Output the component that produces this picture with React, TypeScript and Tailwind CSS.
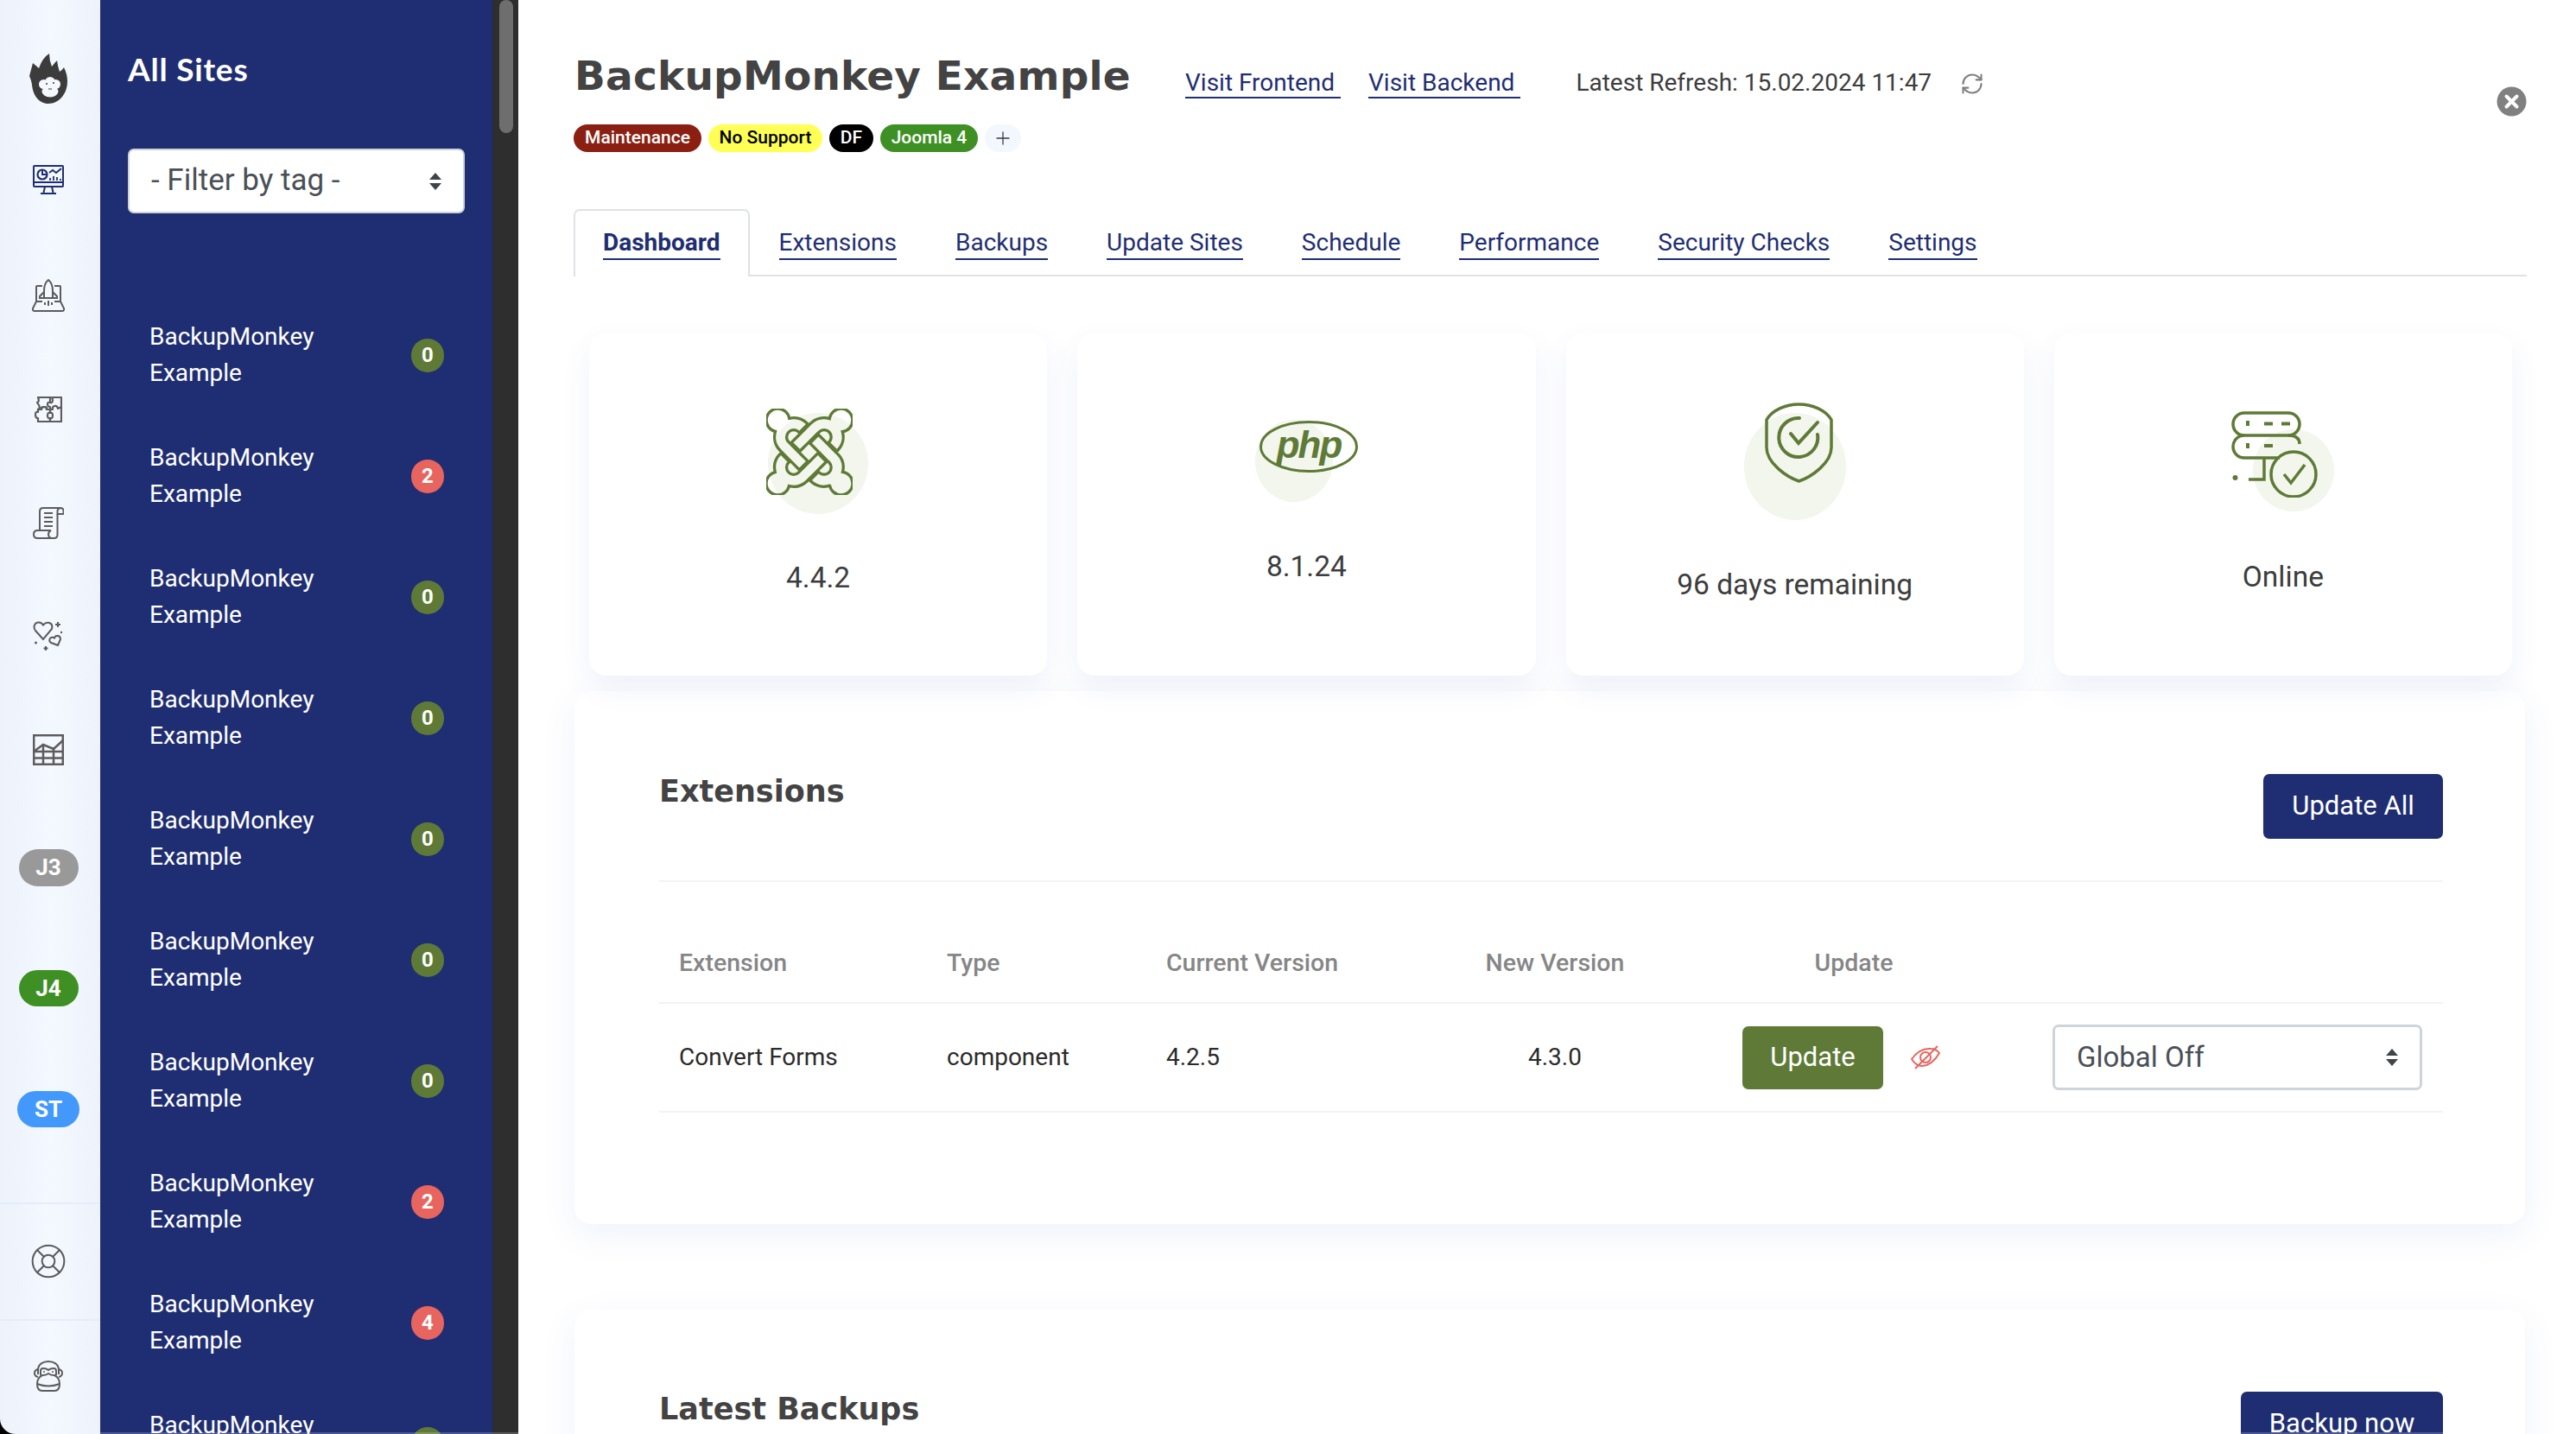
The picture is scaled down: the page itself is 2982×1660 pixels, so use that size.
import { LifeBuoy, Plus, RefreshCw } from 'lucide-react'
import { SiJoomla } from 'react-icons/si'

const NAVY = '#1f2e73'

const sites = [0, 2, 0, 0, 0, 0, 0, 2, 4, 0]
const tags = [
  { label: 'Maintenance', cls: 'w-[148px] bg-[#8b2012] text-white' },
  { label: 'No Support', cls: 'w-[132px] bg-[#ffff55] text-black' },
  { label: 'DF', cls: 'w-[51px] bg-black text-white' },
  { label: 'Joomla 4', cls: 'w-[113px] bg-[#3f9024] text-white' },
]
const tabs = ['Extensions', 'Backups', 'Update Sites', 'Schedule', 'Performance', 'Security Checks', 'Settings']

function Logo() {
  return (
    <svg width="44" height="58" viewBox="0 0 44 58" className="mt-[62px]">
      <path
        d="M0 26 L4 11 Q9 15 11 17 Q15 5 23 0 Q23 8 26 15 Q29 11 32 8 Q33 16 35 21 Q38 19 40 16 Q44 24 44 32 C44 47 34 58 22 58 C11 58 4 48 3 36 Q2 30 0 26Z"
        fill="#3c3c3c"
      />
      <g fill="#f5f8fe">
        <circle cx="16.5" cy="35.5" r="5.5" />
        <circle cx="30.5" cy="35.5" r="5.5" />
        <circle cx="24" cy="33" r="6" />
        <ellipse cx="24" cy="44" rx="9.5" ry="6.5" />
      </g>
      <circle cx="20" cy="35" r="1" fill="#3c3c3c" />
      <circle cx="28" cy="34" r="1" fill="#3c3c3c" />
      <path d="M22 41h4" stroke="#3c3c3c" strokeWidth="1" />
    </svg>
  )
}

function MonitorIcon() {
  return (
    <svg width="36" height="34" viewBox="0 0 36 34" fill="none" stroke={NAVY} strokeWidth="2" className="mt-[71px]">
      <rect x="1" y="1" width="34" height="24" rx="1" />
      <path d="M1 20h34M14 25l-1.5 7M22 25l1.5 7M9 33h18" />
      <circle cx="11" cy="11" r="5.5" strokeWidth="2.2" />
      <path d="M11 6v5h5" />
      <path d="M19 9l4-3 4 3 6-5" />
      <path d="M20 18v-3M24 18v-5M28 18v-4M32 18v-2" strokeWidth="1.8" />
    </svg>
  )
}

function RocketIcon() {
  return (
    <svg width="38" height="38" viewBox="0 0 38 38" fill="none" stroke="#5c5c5c" strokeWidth="2" className="mt-[98px]">
      <path d="M12 8H6a1 1 0 0 0-1 1v17L1 34q-.5 3 2 3h32q2.500 0 2-3l-4-8V9a1 1 0 0 0-1-1h-6" />
      <path d="M19 1q-5 4-5 13v8h10v-8q0-9-5-13Z" />
      <path d="M14 15l-5 5v2h5M24 15l5 5v2h-5M5 26h7M26 26h7M19 25v6M15 27v3M23 27v3" />
    </svg>
  )
}

function PuzzleIcon() {
  return (
    <svg width="32" height="30" viewBox="0 0 32 30" fill="none" stroke="#5c5c5c" strokeWidth="2.200" strokeLinejoin="round" className="mt-[98px]">
      <path d="M4 1h14v6q-3-1-3 2t3 3v3h-4q1-3-3-3t-3 3H4q3-2 1-5T3 7q3-1 1-6Z" />
      <path d="M18 7q3 1 3-3 0-1-1-3h11v28H18v-4q3 1 3-3t-3-3v-4h3q-1-3 2-4t4 3l4-2" />
      <path d="M4 15h4q0-3 3-3t3 3h4v4q-3-1-3 3t3 3v4H4v-4q-3 0-3-4t3-3Z" />
    </svg>
  )
}

function ScrollIcon() {
  return (
    <svg width="36" height="37" viewBox="0 0 36 37" fill="none" stroke="#5c5c5c" strokeWidth="2" className="mt-[98px]">
      <path d="M8 26V5q0-4 4-4h20q3.500 0 3.500 3.500V8h-7V5q0-4 4-4" />
      <path d="M28.500 8v24q0 4-4 4H5.500Q1 36 1 31.500T5.500 27H21q-3 1.500-3 4.500t3 4.500" />
      <path d="M13 7h10M13 12h10M13 17h10M13 22h10" />
    </svg>
  )
}

function HeartsIcon() {
  return (
    <svg width="36" height="34" viewBox="0 0 36 34" fill="none" stroke="#5c5c5c" strokeWidth="2" className="mt-[95px]">
      <path d="M12 21 3 11C0 7 2 2 6 1.500q4-.5 6 3 3-3.500 7-2.500 4.500 1.500 3 7Z" />
      <path d="M29 28l-8-3q-3-2-1-5 2-2 5-.5 1-3 4-2.500 3 .5 3 4Z" />
      <path d="M29 1v6M26 4h6M15 29v5M12.500 31.500h5" />
      <circle cx="3.500" cy="25" r="1.500" fill="#5c5c5c" stroke="none" />
      <circle cx="33" cy="13" r="1.200" fill="#5c5c5c" stroke="none" />
    </svg>
  )
}

function TableChartIcon() {
  return (
    <svg width="36" height="36" viewBox="0 0 36 36" fill="none" stroke="#5c5c5c" strokeWidth="2.500" className="mt-[97px]">
      <rect x="1.200" y="1.200" width="33.600" height="33.600" />
      <path d="M1 20h34M1 27.500h34M12 13v22M24 15v20" />
      <path d="M1 20l11-8 12 5 11-10" />
    </svg>
  )
}

function MonkeyIcon() {
  return (
    <svg width="34" height="36" viewBox="0 0 34 36" fill="none" stroke="#5c5c5c" strokeWidth="2" className="mt-[46px]">
      <path d="M5 16V11C5 4 11 1 17 1s12 3 12 10v5" />
      <path d="M5 10Q1 11 1 14.500 1 18 5 19M29 10q4 1 4 4.500T29 19" />
      <path d="M8 17v-5q0-3 3-3 4 0 6 2 2-2 6-2 3 0 3 3v5" />
      <path d="M17 15q-3 2-7 2-6 3-6 10 0 8 6 8h14q6 0 6-8 0-7-6-10-4 0-7-2Z" />
      <path d="M4 27q13 5 26 0" />
      <circle cx="12" cy="13" r="1" fill="#5c5c5c" stroke="none" />
      <circle cx="22" cy="13" r="1" fill="#5c5c5c" stroke="none" />
    </svg>
  )
}

function UpDownArrows({ className }: { className: string }) {
  return (
    <svg viewBox="0 0 16 20" className={className} fill="#3f444a">
      <path d="M8 0l7 8H1zM8 20l7-8H1z" />
    </svg>
  )
}

function PhpLogo() {
  return (
    <svg width="114" height="60" viewBox="0 0 114 60" className="relative">
      <ellipse cx="57" cy="30" rx="55.500" ry="28.500" fill="none" stroke="#5f7a36" strokeWidth="3" />
      <text x="57" y="43" textAnchor="middle" fill="#5f7a36" fontSize="44" fontWeight="700" fontStyle="italic" fontFamily="Liberation Sans, sans-serif" letterSpacing="-2">
        php
      </text>
    </svg>
  )
}

function ShieldIcon() {
  return (
    <svg width="79" height="93" viewBox="0 0 79 93" fill="none" stroke="#5f7a36" strokeWidth="3.500" className="relative" strokeLinecap="round">
      <path d="M2 20C8 9 24 2 39.500 2S71 9 77 20V52C77 70 54 86 39.500 91 25 86 2 70 2 52Z" />
      <path d="M40 18A22.500 22.500 0 1 0 61 37" strokeWidth="4" />
      <path d="M30 36l9 11 22-24" strokeWidth="4" />
    </svg>
  )
}

function ServerIcon() {
  return (
    <svg width="100" height="100" viewBox="0 0 100 100" fill="none" stroke="#5f7a36" strokeWidth="3.500" className="relative">
      <rect x="2" y="2" width="77" height="26" rx="13" />
      <path d="M56 54H15A13 13 0 0 1 15 28M66 28q13 0 13 10" />
      <path d="M38 54v25H20" />
      <circle cx="72" cy="73" r="26" />
      <path d="M61 73l8 10 16-21" />
      <path d="M19 11v6M38 14.500h10M58 14.500h10M19 37v6M38 40h10" strokeWidth="4" />
      <circle cx="4.500" cy="77" r="3" fill="#5f7a36" stroke="none" />
    </svg>
  )
}

function EyeSlash() {
  return (
    <svg width="34" height="28" viewBox="0 0 34 28" fill="none" stroke="#e8645e" strokeWidth="2" className="ml-[32px]">
      <path d="M1 16Q10 3 23 4q6 0 10 5-8 14-20 15-7 0-12-8Z" />
      <circle cx="17" cy="14" r="6" />
      <path d="M5 27 31 1" />
    </svg>
  )
}

function CloseIcon() {
  return (
    <svg width="35" height="35" viewBox="0 0 35 35" className="ml-auto mb-[-21px]">
      <circle cx="17.500" cy="17.500" r="17" fill="#808080" />
      <path d="M11.500 11.500l12 12M23.500 11.500l-12 12" stroke="#fff" strokeWidth="4" strokeLinecap="round" />
    </svg>
  )
}

function StatCard({ label, icon, blob, labelTop, top, shift }: { label: string; icon: React.ReactNode; blob: string; labelTop: string; top: string; shift: string }) {
  return (
    <div className={`flex h-[396px] flex-col items-center rounded-[20px] bg-white shadow-[0_14px_34px_rgba(60,90,190,0.08)] ${top}`}>
      <div className={`relative ${shift}`}>
        <div className={`absolute rounded-[50%] bg-[#f2f6ed] ${blob}`} />
        {icon}
      </div>
      <div className={`text-[33.5px] leading-[40px] text-[#3d3d3d] ${labelTop}`}>{label}</div>
    </div>
  )
}

export default function App() {
  return (
    <div className="relative flex h-[1660px] w-[2982px] overflow-hidden bg-black font-['Roboto',sans-serif]">
      {/* icon rail */}
      <nav className="flex w-[116px] shrink-0 flex-col items-center rounded-bl-[18px] bg-gradient-to-r from-[#edf2fb] via-[#f4f8ff] to-[#eef3fb] pr-[4px]">
        <Logo />
        <MonitorIcon />
        <RocketIcon />
        <PuzzleIcon />
        <ScrollIcon />
        <HeartsIcon />
        <TableChartIcon />
        <div className="mt-[97px] flex h-[43px] w-[69px] items-center justify-center rounded-full bg-[#999999] text-[26px] font-bold text-white">J3</div>
        <div className="mt-[97px] flex h-[42px] w-[69px] items-center justify-center rounded-full bg-[#3f9024] text-[26px] font-bold text-white">J4</div>
        <div className="mt-[98px] flex h-[42px] w-[72px] items-center justify-center rounded-full bg-[#4299fb] text-[26px] font-bold text-white">ST</div>
        <div className="mt-[87px] h-[2px] w-[116px] self-start bg-[#e4edfa]" />
        <LifeBuoy size={44} strokeWidth={1.100} color="#5c5c5c" className="mt-[44px]" />
        <div className="mt-[45px] h-[2px] w-[116px] self-start bg-[#e4edfa]" />
        <MonkeyIcon />
      </nav>

      {/* site list */}
      <aside className="w-[454px] shrink-0 bg-[#1f2e73] pl-[32px] pr-[32px]">
        <h2 className="mt-[60px] font-['Lato',sans-serif] text-[37px] font-bold leading-[40px] tracking-[0.8px] text-white">All Sites</h2>
        <div className="mt-[72px] flex h-[75px] w-[390px] items-center justify-between rounded-[7px] border-2 border-[#ced4da] bg-white pl-[25px] pr-[24px] text-[35px] text-[#495057]">
          <span>- Filter by tag -</span>
          <UpDownArrows className="h-[20px] w-[16px]" />
        </div>
        <ul className="mt-[94px]">
          {sites.map((count, i) => (
            <li key={i} className="flex h-[140px] w-[390px] items-center justify-between pl-[25px] pr-[24px]">
              <span className="w-[230px] text-[28px] leading-[42px] text-white">BackupMonkey Example</span>
              <span className={`flex h-[39px] w-[38px] items-center justify-center rounded-full text-[24px] font-bold text-white ${count ? 'bg-[#e8645e]' : 'bg-[#5f7a36]'}`}>
                {count}
              </span>
            </li>
          ))}
        </ul>
      </aside>

      {/* scrollbar */}
      <div className="w-[30px] shrink-0 bg-[#2e2e2e] pl-[8px]">
        <div className="h-[154px] w-[16px] rounded-full bg-[#6e6e6e]" />
      </div>

      {/* main */}
      <main className="flex-1 bg-white pl-[64px]">
        <div className="w-[2261px]">
          <div className="ml-[1px] mt-[62px] flex h-[52px] items-end">
            <h1 className="w-[647px] shrink-0 whitespace-nowrap font-['DejaVu_Sans',sans-serif] text-[47px] font-bold leading-[52px] tracking-[0.2px] text-[#434343]">BackupMonkey Example</h1>
            <a className="ml-[60px] border-b-2 border-[#1f2e73] pr-[7px] text-[28px] leading-[32px] text-[#1f2e73]">Visit Frontend</a>
            <a className="ml-[32px] border-b-2 border-[#1f2e73] pr-[7px] text-[28px] leading-[32px] text-[#1f2e73]">Visit Backend</a>
            <span className="ml-[64px] pb-[2px] text-[28px] leading-[32px] text-[#3d3d3d]">Latest Refresh: 15.02.2024 11:47</span>
            <RefreshCw size={28} strokeWidth={1.800} color="#808080" className="mb-[3px] ml-[33px]" />
            <CloseIcon />
          </div>

          <div className="mt-[30px] flex h-[32px] gap-[8px]">
            {tags.map((t) => (
              <span key={t.label} className={`flex items-center justify-center rounded-full text-[21px] font-medium ${t.cls}`}>
                {t.label}
              </span>
            ))}
            <span className="flex w-[42px] items-center justify-center rounded-full bg-[#f3f7fe]">
              <Plus size={24} strokeWidth={1.300} color="#3d3d3d" />
            </span>
          </div>

          <div className="mt-[66px] flex h-[78px] items-stretch border-b-2 border-[#dee2e6]">
            <div className="-mb-[2px] rounded-t-[7px] border-2 border-b-0 border-[#dee2e6] bg-white px-[32px] pt-[19px]">
              <a className="block border-b-2 border-[#1f2e73] text-[28px] font-bold leading-[36px] text-[#1f2e73]">Dashboard</a>
            </div>
            {tabs.map((t) => (
              <div key={t} className="px-[34px] pt-[21px]">
                <a className="block border-b-2 border-[#1f2e73] text-[28px] leading-[36px] text-[#1f2e73]">{t}</a>
              </div>
            ))}
          </div>

          <div className="mt-[66px] grid grid-cols-4 gap-[35px] pl-[18px] pr-[17px]">
            <StatCard
              top="pt-[87px]"
              shift="mr-[20px]"
              label="4.4.2"
              labelTop="mt-[76px]"
              blob="left-[2px] top-[5px] h-[117px] w-[116px]"
              icon={<SiJoomla size={100} className="relative" fill="none" stroke="#5f7a36" strokeWidth="0.8" />}
            />
            <StatCard
              top="pt-[101px]"
              shift="ml-[5px]"
              label="8.1.24"
              labelTop="mt-[89px]"
              blob="left-[-5px] top-[-1px] h-[95px] w-[90px]"
              icon={<PhpLogo />}
            />
            <StatCard
              top="pt-[80px]"
              shift="ml-[9px]"
              label="96 days remaining"
              labelTop="mt-[98px]"
              blob="left-[-24px] top-[12px] h-[124px] w-[118px]"
              icon={<ShieldIcon />}
            />
            <StatCard
              top="pt-[90px]"
              shift="mr-[20px]"
              label="Online"
              labelTop="mt-[72px]"
              blob="left-[25px] top-[21px] h-[95px] w-[94px]"
              icon={<ServerIcon />}
            />
          </div>

          <section className="ml-[1px] mt-[18px] h-[617px] w-[2258px] rounded-[20px] bg-white pl-[98px] pr-[95px] pt-[96px] shadow-[0_12px_40px_rgba(60,90,190,0.08)]">
            <div className="flex items-start justify-between border-b-2 border-[#f3f3f3] pb-[48px]">
              <h2 className="font-['DejaVu_Sans',sans-serif] text-[35px] font-bold leading-[40px] text-[#434343]">Extensions</h2>
              <button className="h-[75px] w-[208px] rounded-[7px] bg-[#1f2e73] text-[31px] text-white">Update All</button>
            </div>
            <table className="w-full table-fixed text-[28px]">
              <thead>
                <tr className="h-[140px] border-b-2 border-[#f3f3f3] text-left align-bottom text-[28.500px] text-[#868686]">
                  <th className="w-[310px] pb-[23px] pl-[23px] font-medium">Extension</th>
                  <th className="w-[254px] pb-[23px] pl-[23px] font-medium">Type</th>
                  <th className="w-[279px] pb-[23px] pl-[23px] font-medium">Current Version</th>
                  <th className="w-[388px] pb-[23px] text-center font-medium">New Version</th>
                  <th className="w-[304px] pb-[23px] text-center font-medium">Update</th>
                  <th className="pb-[23px]"></th>
                </tr>
              </thead>
              <tbody>
                <tr className="h-[126px] border-b-2 border-[#f3f3f3] text-[#2b2b2b]">
                  <td className="pl-[23px]">Convert Forms</td>
                  <td className="pl-[23px]">component</td>
                  <td className="pl-[23px]">4.2.5</td>
                  <td className="text-center">4.3.0</td>
                  <td className="pl-[23px]">
                    <div className="flex items-center">
                      <button className="h-[73px] w-[163px] rounded-[7px] bg-[#5f7a36] text-[31px] text-white">Update</button>
                      <EyeSlash />
                    </div>
                  </td>
                  <td>
                    <div className="ml-auto mr-[24px] flex h-[76px] w-[428px] items-center justify-between rounded-[7px] border-[3px] border-[#ced4da] bg-white pl-[25px] pr-[24px] text-[33px] text-[#495057]">
                      <span>Global Off</span>
                      <UpDownArrows className="h-[20px] w-[16px]" />
                    </div>
                  </td>
                </tr>
              </tbody>
            </table>
          </section>

          <section className="ml-[1px] mt-[99px] h-[400px] w-[2258px] rounded-[20px] bg-white pl-[98px] pr-[95px] pt-[95px] shadow-[0_12px_40px_rgba(60,90,190,0.08)]">
            <div className="flex items-start justify-between">
              <h2 className="font-['DejaVu_Sans',sans-serif] text-[35px] font-bold leading-[40px] text-[#434343]">Latest Backups</h2>
              <button className="h-[75px] w-[234px] rounded-[7px] bg-[#1f2e73] text-[31px] text-white">Backup now</button>
            </div>
          </section>
        </div>
      </main>

      <div className="absolute bottom-0 left-[116px] h-[2px] w-[2866px] bg-white/20" />
    </div>
  )
}
